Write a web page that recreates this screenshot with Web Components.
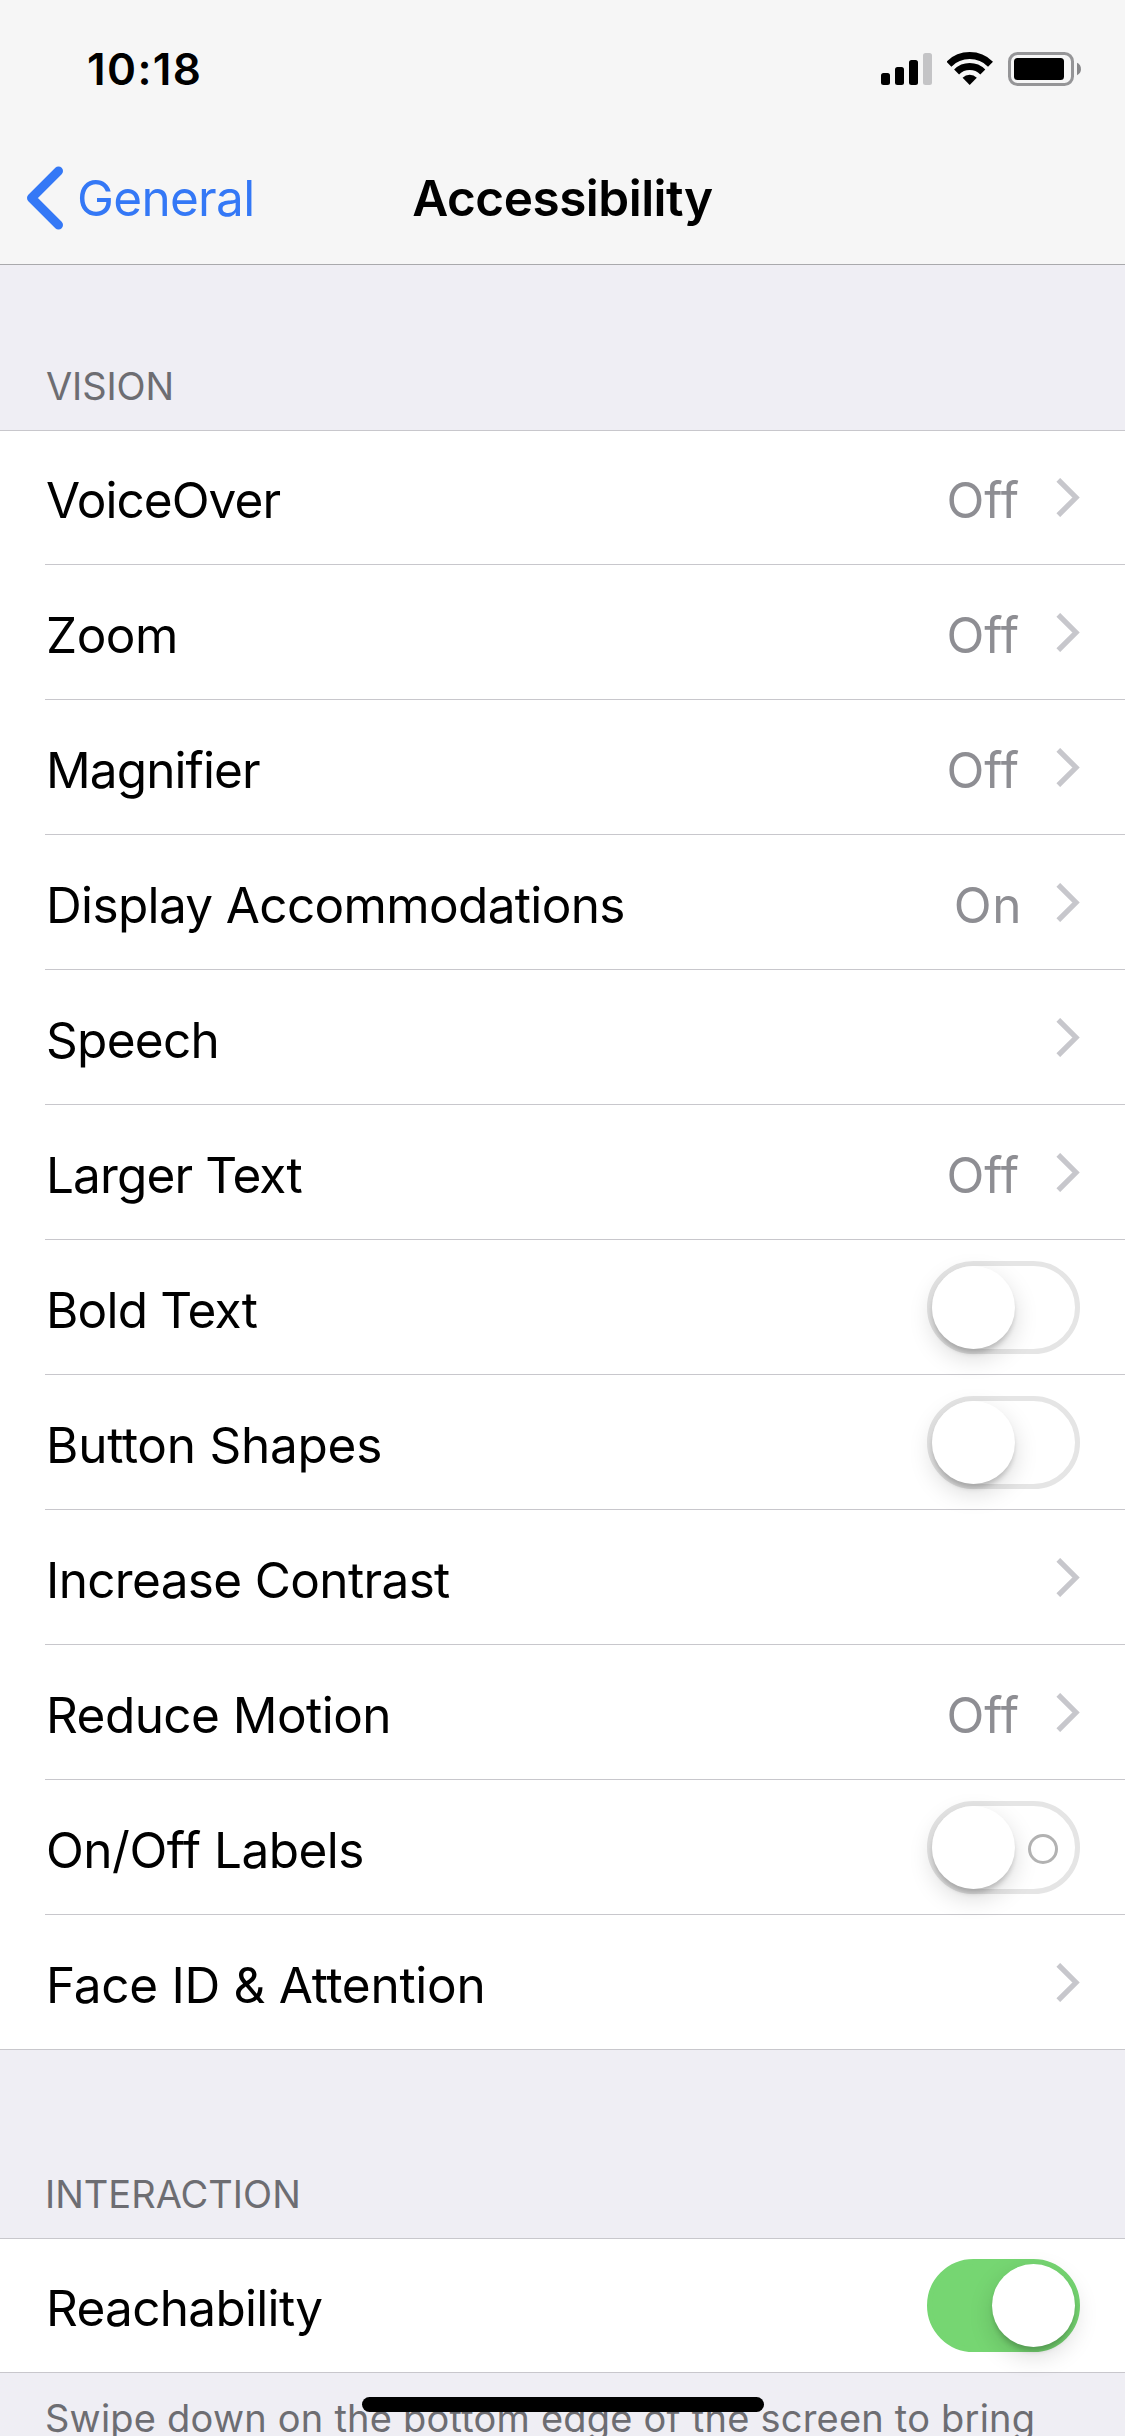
<!DOCTYPE html>
<html lang="en">
<head>
<meta charset="utf-8">
<title>Accessibility</title>
<style>
  :root {
    --color-page: #efeef4;
    --color-bar: #f6f6f6;
    --color-card: #ffffff;
    --color-line: #c8c7cc;
    --color-muted: #6d6d72;
    --color-value: #8e8e93;
    --color-chevron: #c7c7cc;
    --color-tint: #3478f6;
    --color-on: #76d672;
  }

  html, body {
    margin: 0;
    height: 2436px;
    overflow: hidden;
  }

  body {
    background: var(--color-page);
    color: #000;
    font-family: Inter, "Liberation Sans", sans-serif;
    font-size: 49.5px;
  }
</style>
</head>
<body>
<settings-screen>
  <status-bar slot="top" time="10:18"></status-bar>
  <nav-bar slot="top" back="General">Accessibility</nav-bar>

  <settings-group label="VISION" style="--label-tracking: -0.1px">
    <settings-row value="Off" chevron tracking="-0.95">VoiceOver</settings-row>
    <settings-row value="Off" chevron tracking="-0.5">Zoom</settings-row>
    <settings-row value="Off" chevron tracking="-0.9">Magnifier</settings-row>
    <settings-row value="On" chevron tracking="-0.65">Display Accommodations</settings-row>
    <settings-row chevron tracking="-0.7">Speech</settings-row>
    <settings-row value="Off" chevron tracking="-0.87">Larger Text</settings-row>
    <settings-row tracking="-0.8">Bold Text<toggle-switch slot="control"></toggle-switch></settings-row>
    <settings-row tracking="-0.25">Button Shapes<toggle-switch slot="control"></toggle-switch></settings-row>
    <settings-row chevron tracking="-0.65">Increase Contrast</settings-row>
    <settings-row value="Off" chevron tracking="-0.55">Reduce Motion</settings-row>
    <settings-row tracking="-0.5">On/Off Labels<toggle-switch slot="control" labelled></toggle-switch></settings-row>
    <settings-row chevron tracking="-0.28">Face ID &amp; Attention</settings-row>
  </settings-group>

  <settings-group class="spaced" label="INTERACTION" note="Swipe down on the bottom edge of the screen to bring">
    <settings-row tracking="-0.7">Reachability<toggle-switch slot="control" on></toggle-switch></settings-row>
  </settings-group>
</settings-screen>

<script>
class SettingsScreen extends HTMLElement {
  constructor() {
    super();
    this.attachShadow({ mode: 'open' });
    this.shadowRoot.innerHTML = `
      <style>
        :host {
          display: flex;
          flex-direction: column;
          position: relative;
          width: 1125px;
          height: 2436px;
          overflow: hidden;
          background: var(--color-page);
        }

        header {
          background: var(--color-bar);
          border-bottom: 1px solid #a9a9ac;
        }

        /* floats over the scrolled content */
        .home-indicator {
          position: absolute;
          left: 362px;
          bottom: 24px;
          width: 402px;
          height: 15px;
          border-radius: 8px;
          background: #000;
        }
      </style>
      <header><slot name="top"></slot></header>
      <main><slot></slot></main>
      <div class="home-indicator"></div>
    `;
  }
}

class StatusBar extends HTMLElement {
  constructor() {
    super();
    this.attachShadow({ mode: 'open' });
  }

  connectedCallback() {
    this.shadowRoot.innerHTML = `
      <style>
        :host {
          display: flex;
          justify-content: space-between;
          align-items: center;
          box-sizing: border-box;
          height: 132px;
          padding: 6px 44px 0 87px;
        }

        .time {
          font-size: 44px;
          font-weight: 600;
          line-height: 54px;
          letter-spacing: 1.4px;
        }

        .icons {
          display: flex;
          align-items: center;
        }

        svg {
          display: block;
        }

        .wifi {
          margin: 0 15px;
          padding-bottom: 1px;
        }
      </style>
      <div class="time">${this.getAttribute('time')}</div>
      <div class="icons">
        <svg width="51" height="34" viewBox="0 0 51 34">
          <rect x="0" y="21" width="9" height="12" rx="2.5"/>
          <rect x="14" y="15" width="9" height="18" rx="2.5"/>
          <rect x="28" y="8" width="9" height="25" rx="2.5"/>
          <rect x="42" y="1" width="9" height="32" rx="2.5" fill="#c4c4c6"/>
        </svg>
        <svg class="wifi" width="46" height="33" viewBox="0 0 46 33">
          <g fill="none" stroke="#000" stroke-width="7">
            <path d="M1.9 12.2A29.5 29.5 0 0 1 43.5 12.2"/>
            <path d="M9.6 20A18.5 18.5 0 0 1 35.8 20"/>
          </g>
          <path d="M15.6 25.7A10.3 10.3 0 0 1 29.8 25.7L22.7 33Z"/>
        </svg>
        <svg width="73" height="34" viewBox="0 0 73 34">
          <rect x="1.5" y="1.5" width="63" height="31" rx="8" fill="none" stroke="#959597" stroke-width="3"/>
          <rect x="6" y="6" width="50" height="22" rx="3.5"/>
          <path d="M69 10.8C74.3 13 74.3 21 69 23.2Z" fill="#88888a"/>
        </svg>
      </div>
    `;
  }
}

class NavBar extends HTMLElement {
  constructor() {
    super();
    this.attachShadow({ mode: 'open' });
  }

  connectedCallback() {
    this.shadowRoot.innerHTML = `
      <style>
        :host {
          display: grid;
          grid-template-columns: 1fr auto 1fr;
          align-items: center;
          height: 132px;
          line-height: 60px;
        }

        .back {
          display: flex;
          align-items: center;
          gap: 13px;
          padding-left: 26px;
          color: var(--color-tint);
          letter-spacing: -0.7px;
        }

        svg {
          display: block;
        }

        h1 {
          margin: 0;
          font-size: inherit;
          font-weight: 600;
          letter-spacing: -0.5px;
        }
      </style>
      <div class="back">
        <svg width="38" height="64" viewBox="0 0 38 64">
          <path d="M32.5 5L5.5 32L32.5 59" fill="none" stroke="currentColor" stroke-width="9" stroke-linecap="round" stroke-linejoin="round"/>
        </svg>
        <span>${this.getAttribute('back')}</span>
      </div>
      <h1><slot></slot></h1>
    `;
  }
}

class SettingsGroup extends HTMLElement {
  constructor() {
    super();
    this.attachShadow({ mode: 'open' });
  }

  connectedCallback() {
    const note = this.getAttribute('note');
    this.shadowRoot.innerHTML = `
      <style>
        :host {
          display: block;
        }

        h2, p {
          margin: 0;
          font-size: 38px;
          font-weight: 400;
          line-height: 46px;
          color: var(--color-muted);
        }

        h2 {
          padding: 98px 45px 21px 46px;
          letter-spacing: var(--label-tracking, 0);
        }

        :host(.spaced) h2 {
          padding-top: 121px;
          padding-left: 45px;
        }

        .rows {
          border-top: 1px solid var(--color-line);
          border-bottom: 1px solid var(--color-line);
          background: var(--color-card);
        }

        p {
          padding: 22px 45px 0;
          letter-spacing: 0.22px;
          white-space: nowrap;
        }
      </style>
      <h2>${this.getAttribute('label')}</h2>
      <div class="rows"><slot></slot></div>
      ${note ? `<p>${note}</p>` : ''}
    `;
  }
}

class SettingsRow extends HTMLElement {
  constructor() {
    super();
    this.attachShadow({ mode: 'open' });
  }

  connectedCallback() {
    const value = this.getAttribute('value');
    this.shadowRoot.innerHTML = `
      <style>
        :host {
          display: block;
          padding-left: 45px;
        }

        .row {
          display: flex;
          align-items: center;
          box-sizing: border-box;
          height: 135px;
          padding: 1px 45px 0 0;
          border-bottom: 1px solid var(--color-line);
        }

        /* the card's own top border stands in for the first row's top pixel */
        :host(:first-child) .row {
          height: 134px;
          padding-top: 0;
        }

        /* the card closes the last row */
        :host(:last-child) .row {
          height: 134px;
          border-bottom: 0;
        }

        :host(:only-child) .row {
          height: 133px;
        }

        .label, .value {
          line-height: 60px;
          padding-top: 5px;
          white-space: nowrap;
        }

        .label {
          flex: 1;
          padding-left: 1px;
          letter-spacing: ${this.getAttribute('tracking') || 0}px;
        }

        .value {
          color: var(--color-value);
          letter-spacing: ${value === 'On' ? 0.6 : 0}px;
          margin-right: ${value === 'On' ? -3 : 0}px;
        }

        svg {
          display: block;
          margin-left: 37px;
        }
      </style>
      <div class="row">
        <span class="label"><slot></slot></span>
        ${value ? `<span class="value">${value}</span>` : ''}
        <slot name="control"></slot>
        ${this.hasAttribute('chevron') ? `
          <svg width="24" height="39" viewBox="0 0 24 39">
            <path d="M2.3 1.8L20 19.5L2.3 37.2" fill="none" stroke="var(--color-chevron)" stroke-width="5.3"/>
          </svg>` : ''}
      </div>
    `;
  }
}

class ToggleSwitch extends HTMLElement {
  static get observedAttributes() {
    return ['on'];
  }

  constructor() {
    super();
    this.attachShadow({ mode: 'open' });
    this.addEventListener('click', () => this.toggleAttribute('on'));
  }

  connectedCallback() {
    this.render();
  }

  attributeChangedCallback() {
    this.render();
  }

  render() {
    this.shadowRoot.innerHTML = `
      <style>
        :host {
          display: flex;
          align-items: center;
          box-sizing: border-box;
          width: 153px;
          height: 93px;
          border: 5px solid #e5e5e5;
          border-radius: 47px;
        }

        :host([on]) {
          justify-content: flex-end;
          border-color: var(--color-on);
          background: var(--color-on);
        }

        .knob {
          width: 83px;
          height: 83px;
          border-radius: 50%;
          background: #fff;
          box-shadow: 0 9px 24px rgba(0, 0, 0, 0.15), 0 5px 5px -1px rgba(0, 0, 0, 0.18);
        }

        .off-mark {
          box-sizing: border-box;
          width: 30px;
          height: 30px;
          margin: 3px 0 0 13px;
          border: 3px solid #b2b2b2;
          border-radius: 50%;
        }
      </style>
      <div class="knob"></div>
      ${this.hasAttribute('labelled') && !this.hasAttribute('on') ? '<div class="off-mark"></div>' : ''}
    `;
  }
}

customElements.define('settings-screen', SettingsScreen);
customElements.define('status-bar', StatusBar);
customElements.define('nav-bar', NavBar);
customElements.define('settings-group', SettingsGroup);
customElements.define('settings-row', SettingsRow);
customElements.define('toggle-switch', ToggleSwitch);
</script>
</body>
</html>
